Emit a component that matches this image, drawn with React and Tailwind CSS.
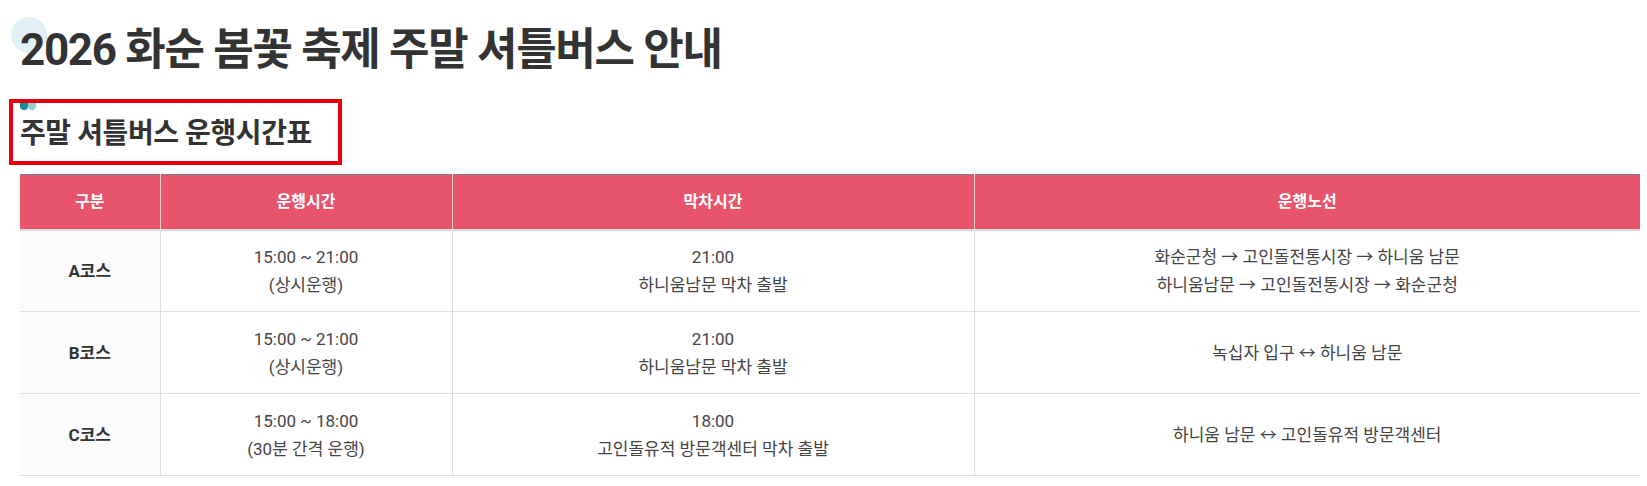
const rows = [
  {
    course: 'A코스',
    hours: ['15:00 ~ 21:00', '(상시운행)'],
    last: ['21:00', '하니움남문 막차 출발'],
    route: ['화순군청 → 고인돌전통시장 → 하니움 남문', '하니움남문 → 고인돌전통시장 → 화순군청'],
  },
  {
    course: 'B코스',
    hours: ['15:00 ~ 21:00', '(상시운행)'],
    last: ['21:00', '하니움남문 막차 출발'],
    route: ['녹십자 입구 ↔ 하니움 남문'],
  },
  {
    course: 'C코스',
    hours: ['15:00 ~ 18:00', '(30분 간격 운행)'],
    last: ['18:00', '고인돌유적 방문객센터 막차 출발'],
    route: ['하니움 남문 ↔ 고인돌유적 방문객센터'],
  },
]

function Lines({ items }) {
  return items.map((t) => (
    <span key={t} className="block">
      {t}
    </span>
  ))
}

export default function App() {
  return (
    <div className="min-h-screen bg-white px-[20px] pt-[24px] font-[Roboto,'Noto_Sans_CJK_KR',sans-serif]">
      {/* 페이지 제목 */}
      <h2 className="relative text-[44px] font-bold leading-[52px] tracking-[-0.03em] text-[#333]">
        <span className="absolute -left-[9px] -top-[7px] h-9 w-9 rounded-full bg-[#e3f1f6]" />
        <span className="relative">2026 화순 봄꽃 축제 주말 셔틀버스 안내</span>
      </h2>

      {/* 소제목 */}
      <div className="-ml-[11px] mt-[23px] flex w-[333px] flex-col border-4 border-[#e60012] pl-[7px]">
        <div className="flex">
          <span className="h-[7px] w-[8px] rounded-b-full bg-[#1a8c97]" />
          <span className="h-[7px] w-[8px] rounded-b-full bg-[#92d2d6]" />
        </div>
        <h3 className="pb-[6px] pt-[3px] text-[28px] font-bold leading-[42px] tracking-[-0.015em] text-[#333]">
          주말 셔틀버스 운행시간표
        </h3>
      </div>

      {/* 운행시간표 */}
      <table className="mt-[9px] w-[1620px] table-fixed border-collapse text-center text-[17px] leading-[28px] text-[#444]">
        <colgroup>
          <col className="w-[140px]" />
          <col className="w-[292px]" />
          <col className="w-[522px]" />
          <col className="w-[666px]" />
        </colgroup>
        <thead>
          <tr className="h-[55px] border-t border-b-2 border-t-[#7d8489] border-b-[#dddddd] bg-[#e8546c] text-[16px] font-bold text-white">
            <th>구분</th>
            <th className="border-l border-white/70">운행시간</th>
            <th className="border-l border-white/70">막차시간</th>
            <th className="border-l border-white/70">운행노선</th>
          </tr>
        </thead>
        <tbody>
          {rows.map((r) => (
            <tr key={r.course} className="h-[82px] border-b border-[#dddddd]">
              <td className="bg-[#f9fbfd] font-bold text-[#333]">{r.course}</td>
              <td className="border-l border-[#dddddd]">
                <Lines items={r.hours} />
              </td>
              <td className="border-l border-[#dddddd]">
                <Lines items={r.last} />
              </td>
              <td className="border-l border-[#dddddd]">
                <Lines items={r.route} />
              </td>
            </tr>
          ))}
        </tbody>
      </table>
    </div>
  )
}
